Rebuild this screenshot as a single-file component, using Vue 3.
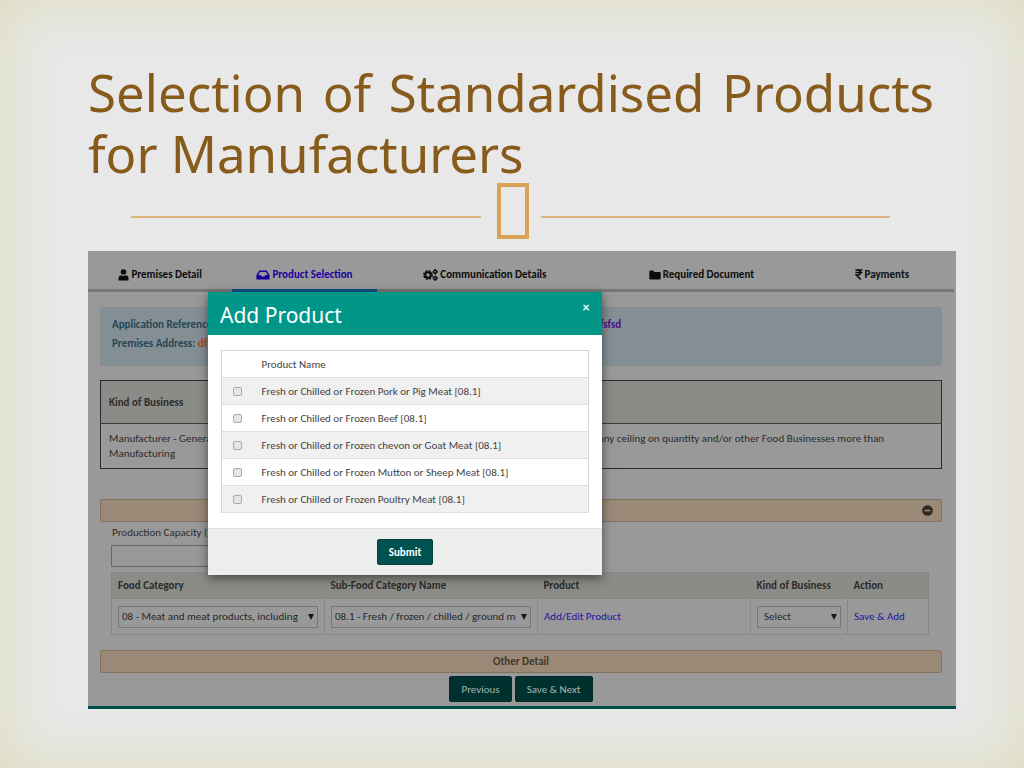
<script setup>
import { ref } from 'vue'

const products = [
  'Fresh or Chilled or Frozen Pork or Pig Meat [08.1]',
  'Fresh or Chilled or Frozen Beef [08.1]',
  'Fresh or Chilled or Frozen chevon or Goat Meat [08.1]',
  'Fresh or Chilled or Frozen Mutton or Sheep Meat [08.1]',
  'Fresh or Chilled or Frozen Poultry Meat [08.1]',
]
const picked = ref([])
</script>

<template>
  <main class="slide">
    <h1>Selection of Standardised Products for Manufacturers</h1>
    <div class="ornament"><i class="rule"></i><i class="glyph"></i><i class="rule"></i></div>

    <section class="app">
      <nav class="tabs">
        <a href="#" class="tab">
          <svg width="11" height="12" viewBox="0 0 11 12"><circle cx="5.5" cy="3" r="2.8" /><path d="M0.5 11.5V9.5Q0.5 6.5 3.2 6.3Q5.5 7.6 7.8 6.3Q10.5 6.5 10.5 9.5V11.5Z" /></svg>
          Premises Detail
        </a>
        <a href="#" class="tab active">
          <svg width="14" height="10" viewBox="0 0 14 10"><path fill-rule="evenodd" d="M3.3 0.5H10.7L13.6 5V8.4Q13.6 9.6 12.4 9.6H1.6Q0.4 9.6 0.4 8.4V5ZM4 2L2.2 5H4.6L5.6 6.6H8.4L9.4 5H11.8L10 2Z" /></svg>
          Product Selection
        </a>
        <a href="#" class="tab">
          <svg width="15" height="12" viewBox="0 0 15 12"><circle cx="5" cy="6" r="2.8" fill="none" stroke="currentColor" stroke-width="2" /><circle cx="5" cy="6" r="4.2" fill="none" stroke="currentColor" stroke-width="1.5" stroke-dasharray="2 1.3" /><circle cx="12.2" cy="2.8" r="1.5" fill="none" stroke="currentColor" stroke-width="1.4" /><circle cx="12.2" cy="9.2" r="1.5" fill="none" stroke="currentColor" stroke-width="1.4" /><path d="M11.6 0h1.2v1h-1.2zM9.6 2.2h1v1.2h-1zM13.9 2.2h1v1.2h-1zM11.6 4.4h1.2v1h-1.2zM11.6 6.6h1.2v1h-1.2zM9.6 8.6h1v1.2h-1zM13.9 8.6h1v1.2h-1zM11.6 10.8h1.2v1h-1.2z" /></svg>
          Communication Details
        </a>
        <a href="#" class="tab">
          <svg width="12" height="10" viewBox="0 0 12 10"><path d="M0.3 1.5Q0.3 0.6 1.2 0.6H4Q5 0.6 5 1.5V2H10.8Q11.7 2 11.7 3V8.4Q11.7 9.4 10.8 9.4H1.2Q0.3 9.4 0.3 8.4Z" /></svg>
          Required Document
        </a>
        <a href="#" class="tab">
          <svg width="8" height="11" viewBox="0 0 8 11"><path d="M0.5 1H7.5M0.5 3.6H7.5M0.5 1H2.6Q5.4 1 5.4 3.5Q5.4 6 2.4 6H1L5.8 10.4" fill="none" stroke="currentColor" stroke-width="1.5" /></svg>
          Payments
        </a>
      </nav>

      <div class="content">
        <div class="notice">
          <p>Application Reference</p>
          <p class="violet">dfsfsd</p>
          <p>Premises Address: <span class="orange">df</span></p>
        </div>

        <table class="business">
          <thead>
            <tr><th scope="col">Kind of Business</th><td></td></tr>
          </thead>
          <tbody>
            <tr>
              <td>Manufacturer - General Manufacturing</td>
              <td>any ceiling on quantity and/or other Food Businesses more than</td>
            </tr>
          </tbody>
        </table>

        <div class="bar first">
          <button type="button" class="collapse" aria-label="Collapse">
            <svg width="11" height="11" viewBox="0 0 11 11"><circle cx="5.5" cy="5.5" r="5.3" /><path d="M2.5 5.5H8.5" stroke="#9c8c7a" stroke-width="1.6" /></svg>
          </button>
        </div>

        <div class="inner">
          <label for="capacity">Production Capacity (</label>
          <input id="capacity" class="capacity" type="text">

          <table class="category">
            <colgroup><col class="wide"><col class="wide"><col class="wide"><col class="kind"><col></colgroup>
            <thead>
              <tr>
                <th scope="col">Food Category</th>
                <th scope="col">Sub-Food Category Name</th>
                <th scope="col">Product</th>
                <th scope="col">Kind of Business</th>
                <th scope="col">Action</th>
              </tr>
            </thead>
            <tbody>
              <tr>
                <td><div class="pick"><select aria-label="Food Category"><option>08 - Meat and meat products, including</option></select></div></td>
                <td><div class="pick"><select aria-label="Sub-Food Category Name"><option>08.1 - Fresh / frozen / chilled / ground meat</option></select></div></td>
                <td><a href="#">Add/Edit Product</a></td>
                <td><div class="pick short"><select aria-label="Kind of Business"><option>Select</option></select></div></td>
                <td><a href="#">Save &amp; Add</a></td>
              </tr>
            </tbody>
          </table>
        </div>

        <div class="bar">Other Detail</div>
        <div class="actions">
          <button type="button" class="btn dim">Previous</button>
          <button type="button" class="btn dim">Save &amp; Next</button>
        </div>
      </div>

      <div class="modal" role="dialog" aria-labelledby="modal-title">
        <header>
          <h2 id="modal-title">Add Product</h2>
          <button type="button" class="close" aria-label="Close">×</button>
        </header>
        <div class="modal-body">
          <table class="products">
            <thead>
              <tr><td></td><th scope="col">Product Name</th></tr>
            </thead>
            <tbody>
              <tr v-for="(name, i) in products" :key="name">
                <td><input :id="'product-' + i" v-model="picked" type="checkbox" :value="name"></td>
                <td><label :for="'product-' + i">{{ name }}</label></td>
              </tr>
            </tbody>
          </table>
        </div>
        <footer><button type="button" class="btn">Submit</button></footer>
      </div>
    </section>
  </main>
</template>

<style>
body { background: #e8e8e8; }
</style>

<style scoped>
* { box-sizing: border-box; }
.slide {
  min-height: 100vh;
  padding: 62px 68px 59px 88px;
  background: #e8e8e8;
  box-shadow: inset 0 0 50px 10px #dfdec6;
  font-family: Carlito, Calibri, Lato, "Noto Sans", sans-serif;
  font-size: 11px;
  line-height: 15px;
  color: #2c2c2c;
}
h1 {
  margin: 0 22px 0 0;
  font: 400 51px/61px "Noto Sans", sans-serif;
  color: #875b1b;
  text-align: justify;
}
.ornament {
  display: flex;
  align-items: center;
  gap: 12px;
  height: 54px;
  margin: 0 66px 13px 43px;
}
.rule { flex: 1; height: 2px; margin-top: 12px; background: #dfb77e; }
.glyph { width: 32px; height: 56px; margin-left: 4px; border: 4px solid #dba355; }

.app { position: relative; background: #999; border-bottom: 3px solid #00504c; }
.tabs {
  display: grid;
  grid-template-columns: 2fr 2fr 3fr 3fr 2fr;
  height: 41px;
  margin-right: 2px;
  border-bottom: 3px solid #777;
}
.tab {
  display: flex;
  align-items: center;
  justify-content: center;
  gap: 2px;
  height: 41px;
  padding-top: 9px;
  border-bottom: 3px solid transparent;
  font-weight: 700;
  color: #0c0c0c;
  text-decoration: none;
}
.tab.active { color: #1a00a0; border-bottom-color: #0f4f86; }
svg { fill: currentColor; flex: none; }

.content { padding: 15px 14px 4px 12px; }
.notice {
  display: grid;
  grid-template-columns: 482px 1fr;
  align-content: start;
  row-gap: 4px;
  height: 59px;
  padding: 10px 12px;
  border-radius: 2px;
  background: #848f95;
  font-weight: 700;
  color: #264657;
}
.notice p { margin: 0; }
.notice .violet { color: #4b1186; }
.orange { color: #a8481c; }

table { width: 100%; border-collapse: collapse; }
th { font-weight: 700; text-align: left; }
.business { margin-top: 14px; border: 1px solid #2b2b2b; table-layout: fixed; }
.business th, .business td { padding: 7px 8px; vertical-align: top; }
.business tr > :first-child { width: 152px; }
.business tr > :last-child { padding-left: 346px; }
.business thead { background: #8b8b87; border-bottom: 1px solid #3c3c3c; }
.business thead th { height: 43px; vertical-align: middle; }

.bar {
  height: 23px;
  border: 1px solid #85715f;
  border-radius: 2px;
  background: #9a8977;
  font-weight: 700;
  line-height: 21px;
  text-align: center;
  color: #43372c;
}
.bar.first { display: flex; align-items: center; justify-content: flex-end; margin-top: 30px; padding-right: 8px; }
.collapse { display: flex; padding: 0; border: 0; background: none; color: #302820; }

.inner { padding: 3px 13px 15px 11px; }
label { display: block; }
.capacity { display: block; width: 200px; height: 22px; margin: 5px 0 5px; border: 1px solid #666; background: #999; }
.inner > label { padding-left: 1px; }
.category { table-layout: fixed; border: 1px solid #888; }
.wide { width: 213px; }
.kind { width: 97px; }
.category th { height: 26px; padding: 0 6px; background: #8b8b87; }
.category td { height: 36px; padding: 0 6px; border: 1px solid #888; }
.category a { color: #1e14a0; text-decoration: none; }
.pick { position: relative; }
.pick::after {
  content: "";
  position: absolute;
  top: 8px;
  right: 4px;
  border: 3px solid transparent;
  border-top: 6px solid #181818;
  border-bottom: 0;
}
.pick select {
  display: block;
  width: 100%;
  height: 22px;
  padding: 0 14px 0 3px;
  appearance: none;
  border: 1px solid #777;
  border-radius: 0;
  background: #999;
  font: inherit;
  color: #282828;
}
.pick.short select { padding-left: 6px; }

.actions { display: flex; justify-content: center; gap: 3px; padding-top: 3px; }
.btn {
  height: 26px;
  padding: 0 11px;
  border: 1px solid #00413e;
  border-radius: 2px;
  background: #00524f;
  font: inherit;
  font-weight: 700;
  color: #fff;
}
.btn.dim { border-color: #002e2c; background: #00312f; font-weight: 400; color: #a5b3b2; }

.modal {
  position: absolute;
  top: 41px;
  left: 120px;
  width: 394px;
  background: #fff;
  box-shadow: 0 3px 10px rgba(0, 0, 0, 0.5);
  color: #444;
}
.modal header {
  display: flex;
  align-items: flex-start;
  justify-content: space-between;
  height: 43px;
  padding: 8px 12px 0;
  background: #009688;
  color: #fff;
}
h2 { margin: 0; font: 400 21px/30px "Noto Sans", sans-serif; }
.close { width: 8px; padding: 0; border: 0; background: none; font: 700 13px/15px Lato, sans-serif; color: #fff; }
.modal-body { padding: 15px 13px; }
.products { border: 1px solid #d4d4d4; }
.products td, .products th { height: 27px; padding: 0; font-weight: 400; border-bottom: 1px solid #ddd; }
.products tr > :first-child { width: 40px; padding-left: 11px; }
.products tbody tr:nth-child(odd) { background: #f0f0f0; }
.products input {
  display: block;
  width: 9px;
  height: 9px;
  margin: 0;
  appearance: none;
  border: 1px solid #aaa;
  border-radius: 2px;
  background: #e6e6e6;
}
.products input:checked { background: #009688; }
.modal footer {
  display: flex;
  align-items: center;
  justify-content: center;
  height: 47px;
  border-top: 1px solid #ddd;
  background: #ebeeed;
}
</style>
